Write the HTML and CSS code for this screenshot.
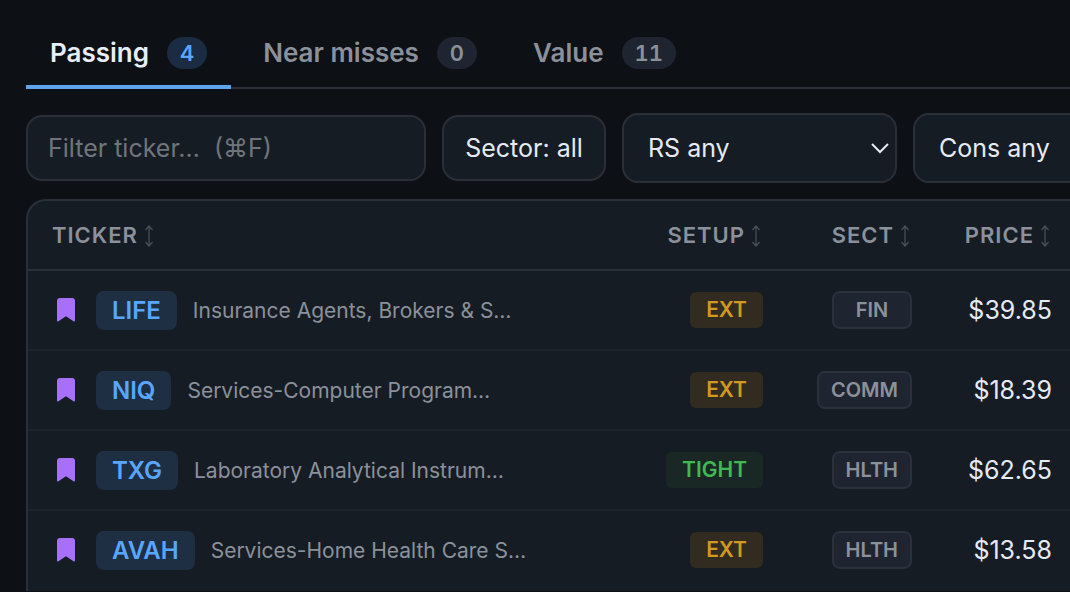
FILE: index.html
```html
<!DOCTYPE html>
<html lang="en">
<head>
<meta charset="utf-8">
<meta name="viewport" content="width=device-width, initial-scale=1">
<title>Screener</title>
<link rel="stylesheet" href="styles.css">
</head>
<body>
<svg class="sprite" aria-hidden="true">
  <symbol id="sort" viewBox="0 0 10 22"><path d="M5 1V21M1.500 5 5 1l3.500 4M1.500 17 5 21l3.500-4" fill="none" stroke="currentColor" stroke-width="1.2"/></symbol>
  <symbol id="bookmark" viewBox="0 0 18 24"><path d="M3 0H15a3 3 0 0 1 3 3V22.500Q18 24 16.500 23.300L9 18.200 1.500 23.300Q0 24 0 22.500V3a3 3 0 0 1 3-3Z" fill="currentColor"/></symbol>
</svg>
<main class="screener">
  <nav class="tabs" aria-label="Lists">
    <button class="tab tab-active" type="button">Passing <span class="count">4</span></button>
    <button class="tab" type="button">Near misses <span class="count">0</span></button>
    <button class="tab" type="button">Value <span class="count">11</span></button>
  </nav>
  <form class="filters">
    <input class="control search" type="text" aria-label="Filter ticker" placeholder="Filter ticker…&nbsp; (⌘F)">
    <button class="control sector" type="button">Sector: all</button>
    <div class="select-wrap">
      <select class="control select" aria-label="RS"><option>RS any</option></select>
      <svg class="chevron" viewBox="0 0 18 11" aria-hidden="true"><path d="M1 1l8 8 8-8" fill="none" stroke="currentColor" stroke-width="2"/></svg>
    </div>
    <div class="select-wrap">
      <select class="control select" aria-label="Cons"><option>Cons any</option></select>
      <svg class="chevron" viewBox="0 0 18 11" aria-hidden="true"><path d="M1 1l8 8 8-8" fill="none" stroke="currentColor" stroke-width="2"/></svg>
    </div>
  </form>
  <div class="panel">
    <table class="stocks">
      <thead>
        <tr>
          <th class="col-ticker" scope="col"><button class="sort" type="button">TICKER<svg class="sort-icon"><use href="#sort"/></svg></button></th>
          <th class="col-setup" scope="col"><button class="sort" type="button">SETUP<svg class="sort-icon"><use href="#sort"/></svg></button></th>
          <th class="col-sect" scope="col"><button class="sort" type="button">SECT<svg class="sort-icon"><use href="#sort"/></svg></button></th>
          <th class="col-price" scope="col"><button class="sort" type="button">PRICE<svg class="sort-icon"><use href="#sort"/></svg></button></th>
        </tr>
      </thead>
      <tbody>
        <tr>
          <td class="col-ticker"><div class="stock"><button class="mark" type="button" aria-label="Bookmark LIFE"><svg class="mark-icon"><use href="#bookmark"/></svg></button><a class="symbol" href="#life">LIFE</a><span class="industry">Insurance Agents, Brokers &amp; S…</span></div></td>
          <td class="col-setup"><span class="setup ext">EXT</span></td>
          <td class="col-sect"><span class="sect">FIN</span></td>
          <td class="col-price">$39.85</td>
        </tr>
        <tr>
          <td class="col-ticker"><div class="stock"><button class="mark" type="button" aria-label="Bookmark NIQ"><svg class="mark-icon"><use href="#bookmark"/></svg></button><a class="symbol" href="#niq">NIQ</a><span class="industry">Services-Computer Program…</span></div></td>
          <td class="col-setup"><span class="setup ext">EXT</span></td>
          <td class="col-sect"><span class="sect">COMM</span></td>
          <td class="col-price">$18.39</td>
        </tr>
        <tr>
          <td class="col-ticker"><div class="stock"><button class="mark" type="button" aria-label="Bookmark TXG"><svg class="mark-icon"><use href="#bookmark"/></svg></button><a class="symbol" href="#txg">TXG</a><span class="industry">Laboratory Analytical Instrum…</span></div></td>
          <td class="col-setup"><span class="setup tight">TIGHT</span></td>
          <td class="col-sect"><span class="sect">HLTH</span></td>
          <td class="col-price">$62.65</td>
        </tr>
        <tr>
          <td class="col-ticker"><div class="stock"><button class="mark" type="button" aria-label="Bookmark AVAH"><svg class="mark-icon"><use href="#bookmark"/></svg></button><a class="symbol" href="#avah">AVAH</a><span class="industry">Services-Home Health Care S…</span></div></td>
          <td class="col-setup"><span class="setup ext">EXT</span></td>
          <td class="col-sect"><span class="sect">HLTH</span></td>
          <td class="col-price">$13.58</td>
        </tr>
      </tbody>
    </table>
  </div>
</main>
</body>
</html>
```
FILE: styles.css
```css
* { box-sizing: border-box; }

body {
  margin: 0;
  background: #0d1015;
  color: #e6eaf2;
  font-family: Inter, "Liberation Sans", "DejaVu Sans", sans-serif;
  font-size: 25px;
  overflow: hidden;
}

button, input, select {
  font: inherit;
  color: inherit;
}

.sprite { display: none; }

.screener {
  padding: 16px 0 0 26px;
  overflow: hidden;
}

/* Tabs */
.tabs {
  display: flex;
  gap: 8px;
  box-shadow: inset 0 -2px #2b2f37;
}

.tab {
  display: flex;
  align-items: center;
  gap: 18px;
  padding: 21px 24px 16px;
  border: 0;
  border-bottom: 4px solid transparent;
  background: none;
  color: #8b919b;
  font-size: 26px;
  font-weight: 600;
  line-height: 32px;
}

.tab-active {
  border-bottom-color: #5ea4ed;
  color: #e9edf5;
}

.count {
  padding: 0 13px;
  border-radius: 16px;
  background: #1e2530;
  font-size: 22px;
  font-variant-numeric: tabular-nums;
}

.tab-active .count {
  background: #1a2b42;
  color: #58a6ff;
}

/* Filters */
.filters {
  display: flex;
  align-items: center;
  gap: 16px;
  padding: 24px 0 16px;
}

.control {
  flex: none;
  height: 66px;
  padding: 0 20px;
  border: 2px solid #2b3038;
  border-radius: 16px;
  background: #161c23;
}

.search { width: 400px; }
.search::placeholder { color: #70757c; opacity: 1; }
.sector { width: 164px; padding: 0; }

.select-wrap {
  display: grid;
  flex: none;
  width: 275px;
  align-items: center;
}

.select {
  grid-area: 1 / 1;
  width: 100%;
  height: 70px;
  padding: 0 24px;
  appearance: none;
}

.chevron {
  grid-area: 1 / 1;
  justify-self: end;
  width: 18px;
  height: 11px;
  margin-right: 8px;
  pointer-events: none;
}

/* Table */
.panel {
  border: solid #2b3038;
  border-width: 2px 0 0 2px;
  border-radius: 20px 0 0 0;
  background: #161c23;
}

.stocks {
  width: 100%;
  border-collapse: separate;
  border-spacing: 0;
}

.stocks th {
  height: 70px;
  padding: 0 0 2px;
  border-bottom: 2px solid #2b3038;
  text-align: right;
}

.stocks td {
  height: 80px;
  padding: 0;
  border-bottom: 2px solid #1e242c;
  text-align: right;
}

.stocks tr:last-child td { border-bottom-color: transparent; }

.stocks .col-ticker { padding-left: 24px; text-align: left; }
.stocks .col-setup { width: 149px; padding-right: 26px; }
.stocks .col-sect { width: 149px; padding-right: 26px; }
.stocks .col-price { width: 132px; padding-right: 18px; }
.stocks th.col-setup, .stocks th.col-sect, .stocks th.col-price { border-bottom-color: #2b3038; }
.stocks thead th { border-bottom-color: #2b3038; }

.sort {
  display: inline-flex;
  align-items: center;
  gap: 6px;
  padding: 0 2px 0 0;
  border: 0;
  background: none;
  color: #8b919b;
  font-size: 22px;
  font-weight: 600;
  letter-spacing: 1px;
}

.sort-icon {
  width: 10px;
  height: 22px;
  margin-top: 2px;
  color: #4b515a;
}

.stock {
  display: flex;
  align-items: center;
}

.mark {
  display: flex;
  margin-right: 16px;
  padding: 0 5px;
  border: 0;
  background: none;
  color: #a870f8;
}

.mark-icon { width: 18px; height: 24px; }

.symbol {
  margin-right: 16px;
  padding: 0 16px;
  border-radius: 8px;
  background: #1f2f43;
  color: #58a6ff;
  font-size: 24px;
  font-weight: 600;
  line-height: 39px;
  text-decoration: none;
}

.industry {
  color: #8b919b;
  font-size: 21px;
  white-space: nowrap;
}

.setup, .sect {
  display: inline-block;
  border-radius: 8px;
  font-weight: 600;
  text-align: center;
  vertical-align: middle;
}

.setup {
  padding: 0 16px;
  border-radius: 6px;
  font-size: 21px;
  line-height: 36px;
}

.ext { background: #322c20; color: #d29922; }
.tight { background: #192824; color: #3fb950; }

.sect {
  min-width: 80px;
  padding: 0 12px;
  border: 2px solid #2b303a;
  background: #1e2530;
  color: #8b919b;
  font-size: 20px;
  line-height: 34px;
}
```
